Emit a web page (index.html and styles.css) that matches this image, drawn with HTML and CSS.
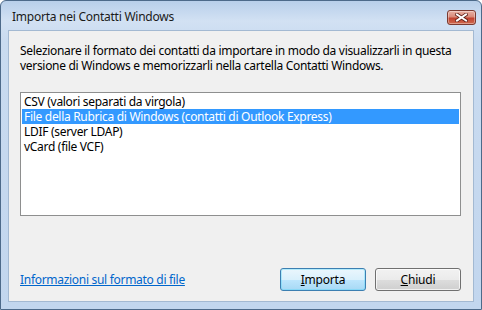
FILE: index.html
```html
<!doctype html>
<html lang="it">
<head>
  <meta charset="utf-8" />
  <title>Importa nei Contatti Windows</title>
  <link rel="stylesheet" href="styles.css">
</head>
<body>
  <div class="window">
    <div class="titleBar">
      <div class="titleText">Importa nei Contatti Windows</div>
      <button class="closeBtn" type="button" aria-label="Chiudi">
        <svg width="13" height="9" viewBox="0 0 13 9">
          <path d="M2 1.5 L11 7.5 M11 1.5 L2 7.5" stroke="#5a1c14" stroke-width="3.6" stroke-linecap="square"/>
          <path d="M2 1.5 L11 7.5 M11 1.5 L2 7.5" stroke="#ffffff" stroke-width="2" stroke-linecap="square"/>
        </svg>
      </button>
    </div>

    <div class="client">
      <p class="intro">Selezionare il formato dei contatti da importare in modo da visualizzarli in questa<br>versione di Windows e memorizzarli nella cartella Contatti Windows.</p>

      <ul class="listBox">
        <li>CSV (valori separati da virgola)</li>
        <li class="selected">File della Rubrica di Windows (contatti di Outlook Express)</li>
        <li>LDIF (server LDAP)</li>
        <li>vCard (file VCF)</li>
      </ul>

      <div class="footer">
        <a class="infoLink" href="#">Informazioni sul formato di file</a>
        <div class="buttons">
          <button class="btn btnDefault" type="button"><u>I</u>mporta</button>
          <button class="btn" type="button"><u>C</u>hiudi</button>
        </div>
      </div>
    </div>
  </div>
</body>
</html>
```

FILE: styles.css
```css
:root{
  --font: "Noto Sans", "Open Sans", sans-serif;
  --frame: #c4d7ee;
  --frameDark: #4d6a8a;
  --client: #f0f0f0;
  --text: #000;
  --select: #3399ff;
  --link: #0066cc;
}

*{ box-sizing:border-box }
body{ margin:0; font-family:var(--font); font-size:12px; color:var(--text); }

/* Window frame */
.window{
  width:482px; height:310px;
  border:1px solid var(--frameDark);
  border-radius:6px 6px 0 0;
  background: linear-gradient(180deg, #b8cfea 0px, #d2e1f3 20px, #c9dbf0 40px, #c2d6ee 100%);
  display:flex;
  flex-direction:column;
  padding:0 7px 7px;
}

.titleBar{
  height:29px;
  display:flex;
  align-items:flex-start;
  justify-content:space-between;
}
.titleText{
  margin:8px 0 0 4px;
  font-size:12px;
  line-height:16px;
  color:#1a1a1a;
  letter-spacing:-.25px;
}

.closeBtn{
  appearance:none;
  margin:9px -2px 0 0;
  width:29px; height:15px;
  padding:0;
  border:1px solid #7b3a30;
  border-radius:3px;
  background: linear-gradient(180deg, #e9b1a4 0%, #d98a79 45%, #c2422f 55%, #cf6a4f 100%);
  box-shadow: inset 0 0 0 1px rgba(255,255,255,.35);
  display:grid;
  place-items:center;
}

/* Client area */
.client{
  flex:1;
  background:var(--client);
  border:1px solid #a3b9d2;
  padding:12px 12px 10px 11px;
  display:flex;
  flex-direction:column;
}

.intro{
  margin:0;
  line-height:15px;
  letter-spacing:-.3px;
}

.listBox{
  list-style:none;
  margin:19px 0 0;
  padding:1px;
  width:441px;
  height:124px;
  background:#fff;
  border:1px solid #8e8f8f;
}
.listBox li{
  height:15px;
  line-height:15px;
  padding:0 2px;
  letter-spacing:-.3px;
  white-space:nowrap;
}
.listBox li.selected{
  background:var(--select);
  color:#fff;
}

.footer{
  margin-top:auto;
  display:flex;
  align-items:center;
  justify-content:space-between;
  width:441px;
}
.infoLink{
  color:var(--link);
  text-decoration:underline;
  letter-spacing:-.3px;
}

.buttons{
  display:flex;
  gap:9px;
}
.btn{
  appearance:none;
  width:86px; height:23px;
  padding:0;
  font:inherit;
  letter-spacing:-.2px;
  color:#000;
  border:1px solid #707070;
  border-radius:3px;
  background: linear-gradient(180deg, #f2f2f2 0%, #ebebeb 50%, #dddddd 51%, #cfcfcf 100%);
  box-shadow: inset 0 0 0 1px rgba(255,255,255,.7);
}
.btnDefault{
  border-color:#3c7fb1;
  background: linear-gradient(180deg, #eaf6fd 0%, #d9f0fc 50%, #bee6fd 51%, #a7d9f5 100%);
  box-shadow: inset 0 0 0 1px #48d4fa55;
}
```
